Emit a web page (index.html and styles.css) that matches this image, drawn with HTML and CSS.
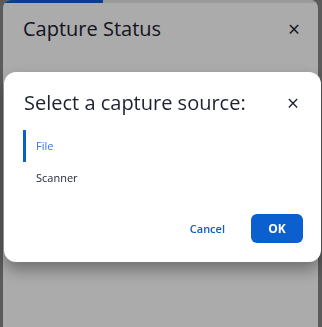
FILE: index.html
```html
<!DOCTYPE html>
<html lang="en">
<head>
    <meta charset="UTF-8">
    <meta name="viewport" content="width=device-width, initial-scale=1.0">
    <title>Capture Status</title>
    <link rel="stylesheet" href="styles.css">
</head>
<body>
    <div class="status-dialog">
        <div class="progress"><div class="progress-fill"></div></div>
        <div class="status-header">
            <h2>Capture Status</h2>
            <span class="close">&times;</span>
        </div>
    </div>

    <div class="overlay"></div>

    <div class="modal">
        <div class="modal-header">
            <h2>Select a capture source:</h2>
            <span class="close">&times;</span>
        </div>
        <ul class="source-list">
            <li class="source active">File</li>
            <li class="source">Scanner</li>
        </ul>
        <div class="modal-actions">
            <button class="btn-link">Cancel</button>
            <button class="btn-primary">OK</button>
        </div>
    </div>
</body>
</html>
```

FILE: styles.css
```css
* {
    margin: 0;
    padding: 0;
    box-sizing: border-box;
}

body {
    background-color: #888;
    font-family: 'Open Sans', 'Noto Sans', sans-serif;
    color: #1c2230;
    height: 327px;
    overflow: hidden;
    padding: 0 4px 0 3px;
}

.status-dialog {
    background-color: #fff;
    height: 100%;
    border-radius: 8px 8px 0 0;
    overflow: hidden;
}

.progress {
    height: 3px;
    background-color: #e5e7eb;
}

.progress-fill {
    width: 100px;
    height: 100%;
    background-color: #0b5fcf;
}

.status-header {
    display: flex;
    justify-content: space-between;
    align-items: center;
    padding: 12px 18px 0 20px;
}

h2 {
    font-size: 20px;
    font-weight: 400;
    line-height: 28px;
}

.close {
    font-size: 21px;
    line-height: 20px;
    color: #1c2230;
}

.overlay {
    position: fixed;
    inset: 0;
    background-color: rgba(0, 0, 0, 0.33);
}

.modal {
    position: fixed;
    left: 4px;
    top: 72px;
    width: 317px;
    height: 190px;
    background-color: #fff;
    border-radius: 12px;
    box-shadow: 0 8px 16px rgba(0, 0, 0, 0.35);
    padding: 17px 20px 0 20px;
}

.modal-header {
    display: flex;
    justify-content: space-between;
    align-items: center;
    padding-right: 2px;
}

.source-list {
    list-style: none;
    margin-top: 13px;
}

.source {
    font-size: 11px;
    height: 32px;
    line-height: 32px;
    padding-left: 10px;
    border-left: 3px solid transparent;
    color: #1c2230;
    margin-left: -1px;
}

.source.active {
    border-left-color: #0b5fcf;
    color: #2f7be0;
}

.modal-actions {
    display: flex;
    justify-content: flex-end;
    align-items: center;
    gap: 26px;
    margin-top: 20px;
}

.btn-link {
    background: none;
    border: none;
    color: #0b5fcf;
    font-family: inherit;
    font-size: 11px;
    font-weight: 600;
}

.btn-primary {
    background-color: #0b5fcf;
    color: #fff;
    border: none;
    border-radius: 6px;
    width: 52px;
    height: 29px;
    font-family: inherit;
    font-size: 12px;
    font-weight: 700;
    margin-right: -2px;
}
```
